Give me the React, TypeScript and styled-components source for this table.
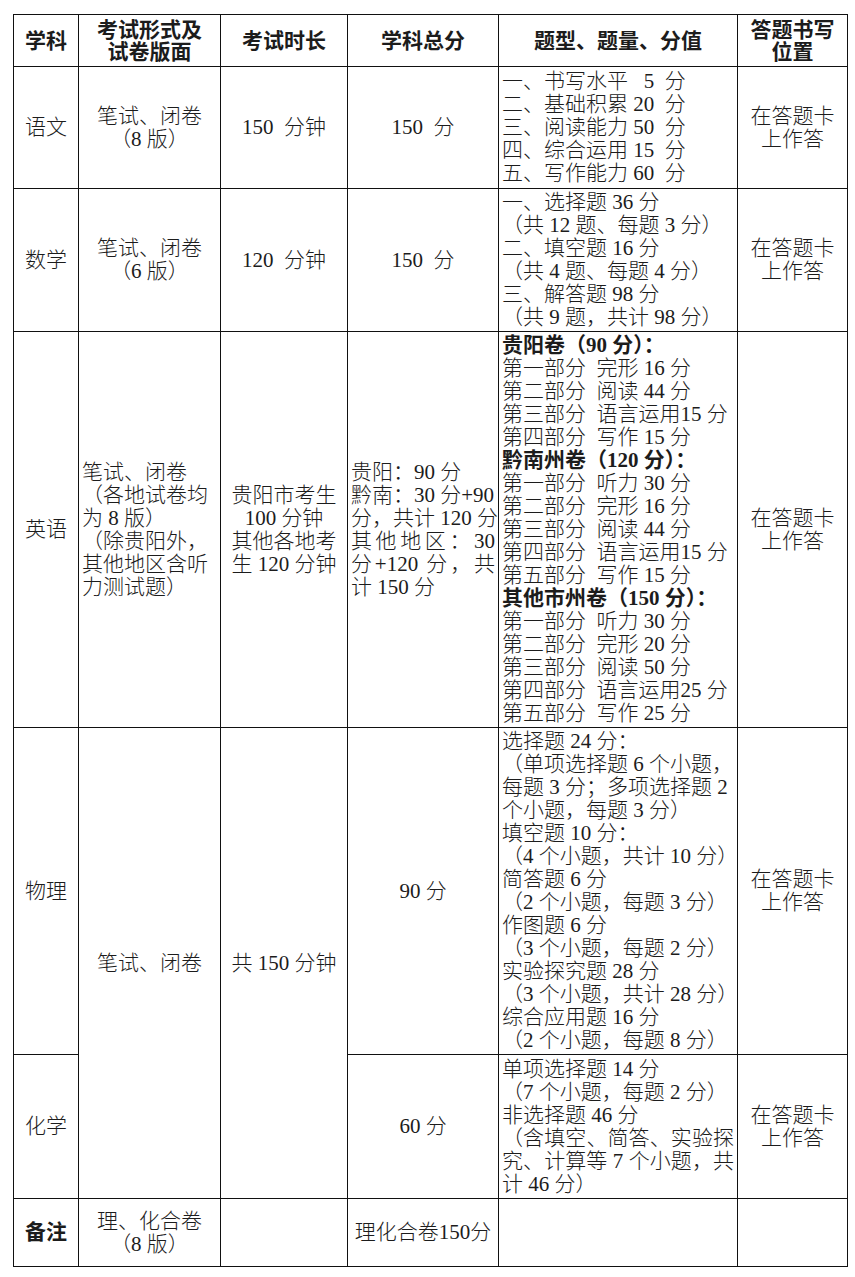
import styled, { createGlobalStyle } from 'styled-components';

const GlobalStyle = createGlobalStyle`
    html, body {
        margin: 0;
        padding: 0;
        background: #fff;
    }
    body {
        font-family: "Liberation Serif", "Noto Sans CJK SC", serif;
        color: #1c1c1c;
    }
`;

const Page = styled.div`
    box-sizing: border-box;
    width: 855px;
    height: 1277px;
    padding: 14px 0 0 13px;
`;

const Sheet = styled.table`
    border-collapse: collapse;
    table-layout: fixed;
    width: 834px;
    font-size: 21px;
    line-height: 23px;
`;

const Row = styled.tr<{ $h: number }>`
    height: ${(p) => p.$h}px;
`;

const HeadCell = styled.th`
    border: 1px solid #111;
    padding: 0 3px;
    font-weight: 700;
    line-height: 22px;
    text-align: center;
    vertical-align: middle;
`;

const Cell = styled.td<{ $align?: 'left' | 'center'; $bold?: boolean }>`
    border: 1px solid #111;
    padding: 0 3px;
    text-align: ${(p) => p.$align ?? 'center'};
    vertical-align: middle;
    font-weight: ${(p) => (p.$bold ? 700 : 300)};
`;

const Line = styled.span<{ $spread?: boolean; $bold?: boolean }>`
    display: block;
    white-space: nowrap;
    font-weight: ${(p) => (p.$bold ? 700 : 'inherit')};
    ${(p) =>
        p.$spread &&
        `
        text-align: justify;
        text-align-last: justify;
        text-justify: inter-character;
    `}
`;

type Item = string | { t: string; spread?: boolean; bold?: boolean };

const Lines = ({ items }: { items: Item[] }) => (
    <>
        {items.map((it, i) =>
            typeof it === 'string' ? (
                <Line key={i}>{it}</Line>
            ) : (
                <Line key={i} $spread={it.spread} $bold={it.bold}>
                    {it.t}
                </Line>
            ),
        )}
    </>
);

const E = '\u2002';
const answerPlace = ['在答题卡', '上作答'];

const yuwen = [
    `一、书写水平 ${E}5${E}分`,
    `二、基础积累 20${E}分`,
    `三、阅读能力 50${E}分`,
    `四、综合运用 15${E}分`,
    `五、写作能力 60${E}分`,
];

const shuxue = [
    '一、选择题 36 分',
    '（共 12 题、每题 3 分）',
    '二、填空题 16 分',
    '（共 4 题、每题 4 分）',
    '三、解答题 98 分',
    '（共 9 题，共计 98 分）',
];

const yingyu: Item[] = [
    { t: '贵阳卷（90 分）：', bold: true },
    `第一部分${E}完形 16 分`,
    `第二部分${E}阅读 44 分`,
    `第三部分${E}语言运用15 分`,
    `第四部分${E}写作 15 分`,
    { t: '黔南州卷（120 分）：', bold: true },
    `第一部分${E}听力 30 分`,
    `第二部分${E}完形 16 分`,
    `第三部分${E}阅读 44 分`,
    `第四部分${E}语言运用15 分`,
    `第五部分${E}写作 15 分`,
    { t: '其他市州卷（150 分）：', bold: true },
    `第一部分${E}听力 30 分`,
    `第二部分${E}完形 20 分`,
    `第三部分${E}阅读 50 分`,
    `第四部分${E}语言运用25 分`,
    `第五部分${E}写作 25 分`,
];

const wuli = [
    '选择题 24 分：',
    '（单项选择题 6 个小题，',
    '每题 3 分；多项选择题 2',
    '个小题，每题 3 分）',
    '填空题 10 分：',
    '（4 个小题，共计 10 分）',
    '简答题 6 分',
    '（2 个小题，每题 3 分）',
    '作图题 6 分',
    '（3 个小题，每题 2 分）',
    '实验探究题 28 分',
    '（3 个小题，共计 28 分）',
    '综合应用题 16 分',
    '（2 个小题，每题 8 分）',
];

const huaxue: Item[] = [
    '单项选择题 14 分',
    '（7 个小题，每题 2 分）',
    '非选择题 46 分',
    { t: '（含填空、简答、实验探', spread: true },
    { t: '究、计算等 7 个小题，共', spread: true },
    '计 46 分）',
];

export default function App() {
    return (
        <Page>
            <GlobalStyle />
            <Sheet>
                <colgroup>
                    <col style={{ width: 65 }} />
                    <col style={{ width: 142 }} />
                    <col style={{ width: 127 }} />
                    <col style={{ width: 151 }} />
                    <col style={{ width: 239 }} />
                    <col style={{ width: 110 }} />
                </colgroup>
                <tbody>
                    <Row $h={52}>
                        <HeadCell>学科</HeadCell>
                        <HeadCell>
                            <Lines items={['考试形式及', '试卷版面']} />
                        </HeadCell>
                        <HeadCell>考试时长</HeadCell>
                        <HeadCell>学科总分</HeadCell>
                        <HeadCell>题型、题量、分值</HeadCell>
                        <HeadCell>
                            <Lines items={['答题书写', '位置']} />
                        </HeadCell>
                    </Row>

                    <Row $h={122}>
                        <Cell>语文</Cell>
                        <Cell>
                            <Lines items={['笔试、闭卷', '（8 版）']} />
                        </Cell>
                        <Cell>150{E}分钟</Cell>
                        <Cell>150{E}分</Cell>
                        <Cell $align="left">
                            <Lines items={yuwen} />
                        </Cell>
                        <Cell>
                            <Lines items={answerPlace} />
                        </Cell>
                    </Row>

                    <Row $h={143}>
                        <Cell>数学</Cell>
                        <Cell>
                            <Lines items={['笔试、闭卷', '（6 版）']} />
                        </Cell>
                        <Cell>120{E}分钟</Cell>
                        <Cell>150{E}分</Cell>
                        <Cell $align="left">
                            <Lines items={shuxue} />
                        </Cell>
                        <Cell>
                            <Lines items={answerPlace} />
                        </Cell>
                    </Row>

                    <Row $h={396}>
                        <Cell>英语</Cell>
                        <Cell $align="left">
                            <Lines
                                items={[
                                    '笔试、闭卷',
                                    '（各地试卷均',
                                    '为 8 版）',
                                    '（除贵阳外，',
                                    '其他地区含听',
                                    '力测试题）',
                                ]}
                            />
                        </Cell>
                        <Cell>
                            <Lines
                                items={[
                                    '贵阳市考生',
                                    '100 分钟',
                                    '其他各地考',
                                    '生 120 分钟',
                                ]}
                            />
                        </Cell>
                        <Cell $align="left">
                            <Lines
                                items={[
                                    '贵阳：90 分',
                                    '黔南：30 分+90',
                                    '分，共计 120 分',
                                    { t: '其他地区：30', spread: true },
                                    { t: '分+120 分，共', spread: true },
                                    '计 150 分',
                                ]}
                            />
                        </Cell>
                        <Cell $align="left">
                            <Lines items={yingyu} />
                        </Cell>
                        <Cell>
                            <Lines items={answerPlace} />
                        </Cell>
                    </Row>

                    <Row $h={327}>
                        <Cell>物理</Cell>
                        <Cell rowSpan={2}>笔试、闭卷</Cell>
                        <Cell rowSpan={2}>共 150 分钟</Cell>
                        <Cell>90 分</Cell>
                        <Cell $align="left">
                            <Lines items={wuli} />
                        </Cell>
                        <Cell>
                            <Lines items={answerPlace} />
                        </Cell>
                    </Row>

                    <Row $h={144}>
                        <Cell>化学</Cell>
                        <Cell>60 分</Cell>
                        <Cell $align="left">
                            <Lines items={huaxue} />
                        </Cell>
                        <Cell>
                            <Lines items={answerPlace} />
                        </Cell>
                    </Row>

                    <Row $h={68}>
                        <Cell $bold>备注</Cell>
                        <Cell>
                            <Lines items={['理、化合卷', '（8 版）']} />
                        </Cell>
                        <Cell />
                        <Cell>理化合卷150分</Cell>
                        <Cell />
                        <Cell />
                    </Row>
                </tbody>
            </Sheet>
        </Page>
    );
}
